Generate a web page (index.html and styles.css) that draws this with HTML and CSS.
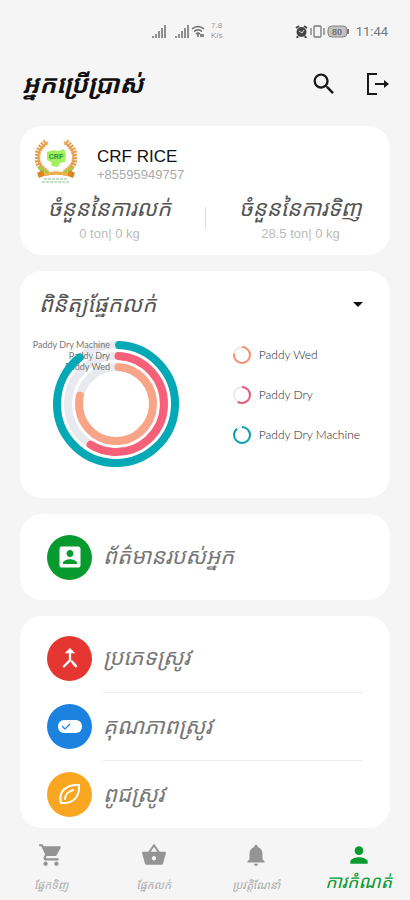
FILE: index.html
```html
<!DOCTYPE html>
<html lang="km">
<head>
    <meta charset="UTF-8">
    <meta name="viewport" content="width=device-width, initial-scale=1.0">
    <title>CRF Rice</title>
    <link rel="stylesheet" href="styles.css">
</head>
<body>
    <!-- Status Bar -->
    <div class="statusbar">
        <div class="status-group">
            <svg width="15" height="13" viewBox="0 0 15 13" fill="#8f8f8f"><path d="M0 11h2v2H0zM3 9h2v4H3zM6 6h2v7H6zM9 3h2v10H9zM12 0h2v13h-2z"/></svg>
            <svg class="second-signal" width="15" height="13" viewBox="0 0 15 13" fill="#8f8f8f"><path d="M0 11h2v2H0zM3 9h2v4H3zM6 6h2v7H6zM9 3h2v10H9zM12 0h2v13h-2z"/></svg>
            <svg width="14" height="13" viewBox="0 0 14 13" fill="none" stroke="#6c6c6c" stroke-width="1.6"><path d="M1 4Q7-1 13 4M3 6.500Q7 3 11 6.500M5 9Q7 7 9 9M7 9v3M10 9v3M12 12V9"/></svg>
            <span class="speed">7.8<br>K/s</span>
        </div>
        <div class="status-group status-right">
            <svg width="13" height="13" viewBox="0 0 13 13"><circle cx="6.500" cy="7" r="5" fill="#444"/><path d="M1 3l3-2M12 3L9 1M3 11l-1 2M10 11l1 2" stroke="#444" stroke-width="2"/><path d="M4 6l3 2 2-3" fill="none" stroke="#ddd"/></svg>
            <svg width="15" height="13" viewBox="0 0 15 13" fill="none" stroke="#777" stroke-width="1.300"><rect x="4" y="1" width="7" height="11" rx="1"/><path d="M1 3v7M14 3v7"/></svg>
            <svg width="23" height="13" viewBox="0 0 23 13"><rect x="1" y="1" width="19" height="11" rx="4" fill="#c2c2c2" stroke="#858585"/><path d="M21 4v5" stroke="#777" stroke-width="2"/><text x="10" y="10" class="battery-text">80</text></svg>
            <span class="time">11:44</span>
        </div>
    </div>

    <!-- Page Header -->
    <header class="header">
        <h1>អ្នកប្រើប្រាស់</h1>
        <button class="icon-button" aria-label="Search">
            <svg width="28" height="28" viewBox="0 0 24 24" fill="#181818"><path d="M15.500 14h-.79l-.28-.27A6.470 6.470 0 0 0 16 9.500 6.500 6.500 0 1 0 9.500 16c1.610 0 3.090-.59 4.230-1.570l.27.28v.79l5 4.990L20.490 19l-4.990-5zm-6 0C7.010 14 5 11.990 5 9.500S7.010 5 9.500 5 14 7.010 14 9.500 11.990 14 9.500 14z"/></svg>
        </button>
        <button class="icon-button" aria-label="Logout">
            <svg width="24" height="24" viewBox="0 0 24 24" fill="none" stroke="#181818" stroke-width="2"><path d="M11 2H2v20h9M9 12h12"/><path d="M18 8l5 4-5 4z" fill="#181818" stroke="none"/></svg>
        </button>
    </header>

    <main class="content">
        <!-- Profile Card -->
        <section class="card profile">
            <div class="profile-top">
                <svg class="logo" width="42" height="44" viewBox="0 0 42 44">
                    <g fill="none" stroke="#e8a050">
                        <path d="M13 3C-1 12 1 27 13 33M29 3c14 9 12 24 0 30" stroke-width="2"/>
                        <path d="M11 3C-1 12-1 26 12 33M31 3c12 9 12 23-1 30" stroke-width="6" stroke-dasharray="2 1"/>
                    </g>
                    <path d="M4 28q3 5 10 5M38 28q-3 5-10 5" fill="none" stroke="#a2cf45" stroke-width="3"/>
                    <path d="M12 13l7-2 4 1 6-2 2 5-1 8-5 1-2 4-6-1-1-4-4-2z" fill="#a2f05c"/>
                    <text x="21" y="20" class="logo-text">CRF</text>
                    <path d="M2 34l5-3 2 3q12-3 24 0l2-3 5 3-2 5-5-2q-12-3-24 0l-5 2z" fill="#dc8522"/>
                    <path d="M9 34q12-3 24 0v3q-12-3-24 0z" fill="#eeb04d"/>
                    <path d="M9 40h24M7 43h28" stroke="#91bd95" stroke-width="1" stroke-dasharray="3 1"/>
                </svg>
                <div>
                    <div class="name">CRF RICE</div>
                    <div class="phone">+85595949757</div>
                </div>
            </div>
            <div class="totals">
                <div class="total">
                    <div class="total-title">ចំនួននៃការលក់</div>
                    <div class="total-value">0 ton| 0 kg</div>
                </div>
                <div class="total">
                    <div class="total-title">ចំនួននៃការទិញ</div>
                    <div class="total-value">28.5 ton| 0 kg</div>
                </div>
            </div>
        </section>

        <!-- Sales Chart -->
        <section class="card sales">
            <div class="sales-select">
                <select aria-label="ពិនិត្យផ្នែកលក់">
                    <option>ពិនិត្យផ្នែកលក់</option>
                </select>
            </div>
            <div class="chart-row">
                <svg class="chart" width="160" height="128" viewBox="0 0 160 128">
                    <g fill="none" stroke="#e9eaef" stroke-width="8">
                        <circle cx="88" cy="64" r="59"/>
                        <circle cx="88" cy="64" r="48"/>
                        <circle cx="88" cy="64" r="37"/>
                    </g>
                    <g class="chart-label">
                        <text x="82" y="8">Paddy Dry Machine</text>
                        <text x="82" y="19">Paddy Dry</text>
                        <text x="82" y="30">Paddy Wed</text>
                    </g>
                    <g fill="none" stroke-width="8" stroke-linecap="round">
                        <circle cx="88" cy="64" r="59" stroke="#04a9b5" pathLength="360" stroke-dasharray="319 360" transform="rotate(-87 88 64)"/>
                        <circle cx="88" cy="64" r="48" stroke="#f76079" pathLength="360" stroke-dasharray="209 360" transform="rotate(-87 88 64)"/>
                        <circle cx="88" cy="64" r="37" stroke="#f9a486" pathLength="360" stroke-dasharray="279 360" transform="rotate(-86 88 64)"/>
                    </g>
                </svg>
                <ul class="legend">
                    <li>
                        <svg width="18" height="18" viewBox="0 0 18 18" fill="none" stroke-width="2"><circle cx="9" cy="9" r="8" stroke="#e9eaef"/><circle cx="9" cy="9" r="8" stroke="#f58f6c" pathLength="360" stroke-dasharray="280 360" transform="rotate(-90 9 9)"/></svg>
                        Paddy Wed
                    </li>
                    <li>
                        <svg width="18" height="18" viewBox="0 0 18 18" fill="none" stroke-width="2"><circle cx="9" cy="9" r="8" stroke="#e9eaef"/><circle cx="9" cy="9" r="8" stroke="#ee5573" pathLength="360" stroke-dasharray="212 360" transform="rotate(-90 9 9)"/></svg>
                        Paddy Dry
                    </li>
                    <li>
                        <svg width="18" height="18" viewBox="0 0 18 18" fill="none" stroke-width="2"><circle cx="9" cy="9" r="8" stroke="#e9eaef"/><circle cx="9" cy="9" r="8" stroke="#04a0ad" pathLength="360" stroke-dasharray="322 360" transform="rotate(-90 9 9)"/></svg>
                        Paddy Dry Machine
                    </li>
                </ul>
            </div>
        </section>

        <!-- User Info -->
        <section class="card menu">
            <a href="#" class="menu-item">
                <span class="menu-icon green">
                    <svg width="28" height="28" viewBox="0 0 24 24" fill="#fff"><path d="M3 5v14c0 1.100.89 2 2 2h14c1.100 0 2-.9 2-2V5c0-1.100-.9-2-2-2H5a2 2 0 0 0-2 2zm12 4c0 1.660-1.340 3-3 3s-3-1.340-3-3 1.340-3 3-3 3 1.340 3 3zm-9 8c0-2 4-3.100 6-3.100s6 1.100 6 3.100v1H6v-1z"/></svg>
                </span>
                <span class="menu-label">ព័ត៌មានរបស់អ្នក</span>
            </a>
        </section>

        <!-- Rice Settings -->
        <section class="card menu">
            <a href="#" class="menu-item">
                <span class="menu-icon red">
                    <svg width="28" height="28" viewBox="0 0 24 24" fill="#fff"><path d="M17 20.410L18.410 19 15 15.590 13.590 17 17 20.410zM7.500 8H11v5.590L5.590 19 7 20.410l6-6V8h3.500L12 3.500 7.500 8z"/><path d="M13 14.400l4 4" stroke="#fff" stroke-width="2"/></svg>
                </span>
                <span class="menu-label">ប្រភេទស្រូវ</span>
            </a>
            <a href="#" class="menu-item">
                <span class="menu-icon blue">
                    <svg width="24" height="13" viewBox="0 0 24 13"><rect width="24" height="13" rx="6" fill="#fff"/><path d="M4 6l3 3 5-5" fill="none" stroke="#1b83df" stroke-width="1.200"/></svg>
                </span>
                <span class="menu-label">គុណភាពស្រូវ</span>
            </a>
            <a href="#" class="menu-item">
                <span class="menu-icon orange">
                    <svg width="24" height="24" viewBox="0 0 24 24" fill="none" stroke="#fff" stroke-width="2" stroke-linejoin="round"><path d="M3 21C0 10 8 2 21 3c1 12-6 19-18 18z"/><path d="M7 17c0-5 3-7 8-9" stroke-linecap="round"/></svg>
                </span>
                <span class="menu-label">ពូជស្រូវ</span>
            </a>
        </section>
    </main>

    <!-- Bottom Navigation -->
    <nav class="bottomnav">
        <a href="#">
            <svg width="26" height="26" viewBox="0 0 24 24"><path d="M7 18c-1.100 0-1.990.9-1.990 2S5.900 22 7 22s2-.9 2-2-.9-2-2-2zM1 2v2h2l3.600 7.590-1.350 2.450c-.16.28-.25.61-.25.96 0 1.100.9 2 2 2h12v-2H7.420c-.14 0-.25-.11-.25-.25l.03-.12.900-1.630h7.450c.75 0 1.410-.41 1.750-1.030l3.580-6.490A1 1 0 0 0 20 4H5.210l-.94-2H1zm16 16c-1.100 0-1.990.9-1.990 2s.89 2 1.990 2 2-.9 2-2-.9-2-2-2z"/></svg>
            <span>ផ្នែកទិញ</span>
        </a>
        <a href="#">
            <svg width="26" height="26" viewBox="0 0 24 24"><path d="M17.210 9l-4.380-6.560a1 1 0 0 0-1.660 0L6.790 9H2c-.55 0-1 .45-1 1l.04.27 2.540 9.270C3.810 20.380 4.580 21 5.500 21h13c.92 0 1.690-.62 1.930-1.460l2.540-9.270L23 10c0-.55-.45-1-1-1h-4.790zM9 9l3-4.400L15 9H9zm3 8c-1.100 0-2-.9-2-2s.9-2 2-2 2 .9 2 2-.9 2-2 2z"/></svg>
            <span>ផ្នែកលក់</span>
        </a>
        <a href="#">
            <svg width="26" height="26" viewBox="0 0 24 24"><path d="M12 22c1.100 0 2-.9 2-2h-4c0 1.100.89 2 2 2zm6-6v-5c0-3.070-1.640-5.640-4.500-6.320V4a1.500 1.500 0 0 0-3 0v.68C7.630 5.360 6 7.920 6 11v5l-2 2v1h16v-1l-2-2z"/></svg>
            <span>ប្រវត្តិណែនាំ</span>
        </a>
        <a href="#" class="active">
            <svg width="26" height="26" viewBox="0 0 24 24"><path d="M12 12c2.210 0 4-1.790 4-4s-1.790-4-4-4-4 1.790-4 4 1.790 4 4 4zm0 2c-2.670 0-8 1.340-8 4v2h16v-2c0-2.660-5.330-4-8-4z"/></svg>
            <span>ការកំណត់</span>
        </a>
    </nav>
</body>
</html>
```
FILE: styles.css
```css
* {
    box-sizing: border-box;
}

body {
    display: flex;
    flex-direction: column;
    min-height: 100vh;
    margin: 0;
    background-color: #f5f5f5;
    font-family: "Liberation Sans", "Noto Sans Khmer", Arial, sans-serif;
    color: #444;
}

a {
    color: inherit;
    text-decoration: none;
}

svg {
    flex-shrink: 0;
}

/* Status Bar */
.statusbar {
    display: flex;
    justify-content: space-between;
    height: 62px;
    padding: 0 22px 0 152px;
}

.status-group {
    display: flex;
    align-items: center;
    gap: 1px;
}

.second-signal {
    margin-left: 7px;
}

.speed {
    margin-left: 5px;
    font-size: 8px;
    line-height: 10px;
    color: #999;
}

.status-right {
    gap: 2px;
}

.battery-text {
    font-size: 9px;
    font-weight: bold;
    fill: #777;
    text-anchor: middle;
}

.time {
    margin-left: 4px;
    font-family: Roboto, sans-serif;
    font-size: 13px;
    color: #777;
}

/* Page Header */
.header {
    display: flex;
    align-items: center;
    gap: 28px;
    height: 44px;
    padding: 0 20px 0 22px;
}

.header h1 {
    flex: 1;
    margin: 0;
    font-size: 25px;
    font-style: italic;
    font-weight: bold;
    line-height: 44px;
    color: #111;
    white-space: nowrap;
}

.icon-button {
    display: flex;
    padding: 0;
    border: none;
    background: none;
    cursor: pointer;
}

/* Cards */
.content {
    display: flex;
    flex-direction: column;
    flex: 1;
    gap: 16px;
    padding: 20px 20px 0;
}

.card {
    background-color: #fff;
    border-radius: 22px;
}

/* Profile Card */
.profile {
    padding: 13px 0;
}

.profile-top {
    display: flex;
    gap: 20px;
    padding-left: 15px;
}

.logo-text {
    font-size: 7px;
    font-weight: bold;
    fill: #24913b;
    text-anchor: middle;
}

.name {
    margin-top: 9px;
    font-size: 17px;
    line-height: 18px;
    color: #111;
}

.phone {
    font-size: 13px;
    line-height: 17px;
    color: #aaa;
}

.totals {
    display: flex;
    margin-top: 10px;
}

.total {
    flex: 1;
    padding-right: 6px;
    text-align: center;
}

.total + .total {
    padding: 0 0 0 6px;
    background: linear-gradient(#ddd, #ddd) left 14px / 1px 22px no-repeat;
}

.total-title {
    height: 32px;
    font-size: 22px;
    font-style: italic;
    line-height: 32px;
    color: #555;
    white-space: nowrap;
}

.total-value {
    font-size: 13px;
    line-height: 17px;
    color: #bbb;
}

/* Sales Chart */
.sales {
    padding: 16px 27px 30px 8px;
}

.sales-select {
    display: flex;
    align-items: center;
    padding-left: 11px;
}

.sales-select select {
    flex: 1;
    height: 34px;
    padding: 0;
    border: none;
    background: none;
    appearance: none;
    font-family: inherit;
    font-size: 22px;
    font-style: italic;
    color: #555;
}

.sales-select::after {
    content: "";
    border: 5px solid transparent;
    border-top-color: #111;
    border-bottom: none;
}

.chart-row {
    display: flex;
    justify-content: space-between;
    margin-top: 19px;
}

.chart-label {
    font-family: Lato, sans-serif;
    font-size: 9px;
    fill: #777;
    text-anchor: end;
}

.legend {
    display: flex;
    flex-direction: column;
    gap: 22px;
    margin: 0;
    padding: 6px 3px 0 0;
    list-style: none;
    font-family: Lato, sans-serif;
    font-size: 12px;
    font-weight: 300;
    line-height: 18px;
    color: #222;
}

.legend li {
    display: flex;
    align-items: center;
    gap: 8px;
}

/* Menu Cards */
.menu {
    padding: 9px 27px;
}

.menu + .menu {
    padding: 8px 27px 0;
}

.menu-item {
    display: flex;
    align-items: center;
    gap: 11px;
    height: 68px;
}

.menu-icon {
    display: flex;
    flex-shrink: 0;
    align-items: center;
    justify-content: center;
    width: 45px;
    height: 45px;
    border-radius: 50%;
}

.menu-label {
    flex: 1;
    height: 68px;
    font-size: 22px;
    font-style: italic;
    line-height: 67px;
    color: #777;
    white-space: nowrap;
}

.menu-item + .menu-item .menu-label {
    border-top: 1px solid #eee;
}

.green {
    background-color: #079a2f;
}

.red {
    background-color: #e53632;
}

.blue {
    background-color: #1b83df;
}

.orange {
    background-color: #f9a621;
}

/* Bottom Navigation */
.bottomnav {
    display: flex;
    height: 72px;
}

.bottomnav a {
    display: flex;
    flex: 1;
    flex-direction: column;
    align-items: center;
    padding-top: 14px;
    font-size: 11px;
    font-style: italic;
    line-height: 34px;
    color: #aaa;
    white-space: nowrap;
}

.bottomnav svg {
    fill: #949494;
}

.bottomnav .active {
    font-size: 18px;
    line-height: 28px;
    color: #0a9a2f;
}

.bottomnav .active svg {
    fill: #0a9a2f;
}
```
